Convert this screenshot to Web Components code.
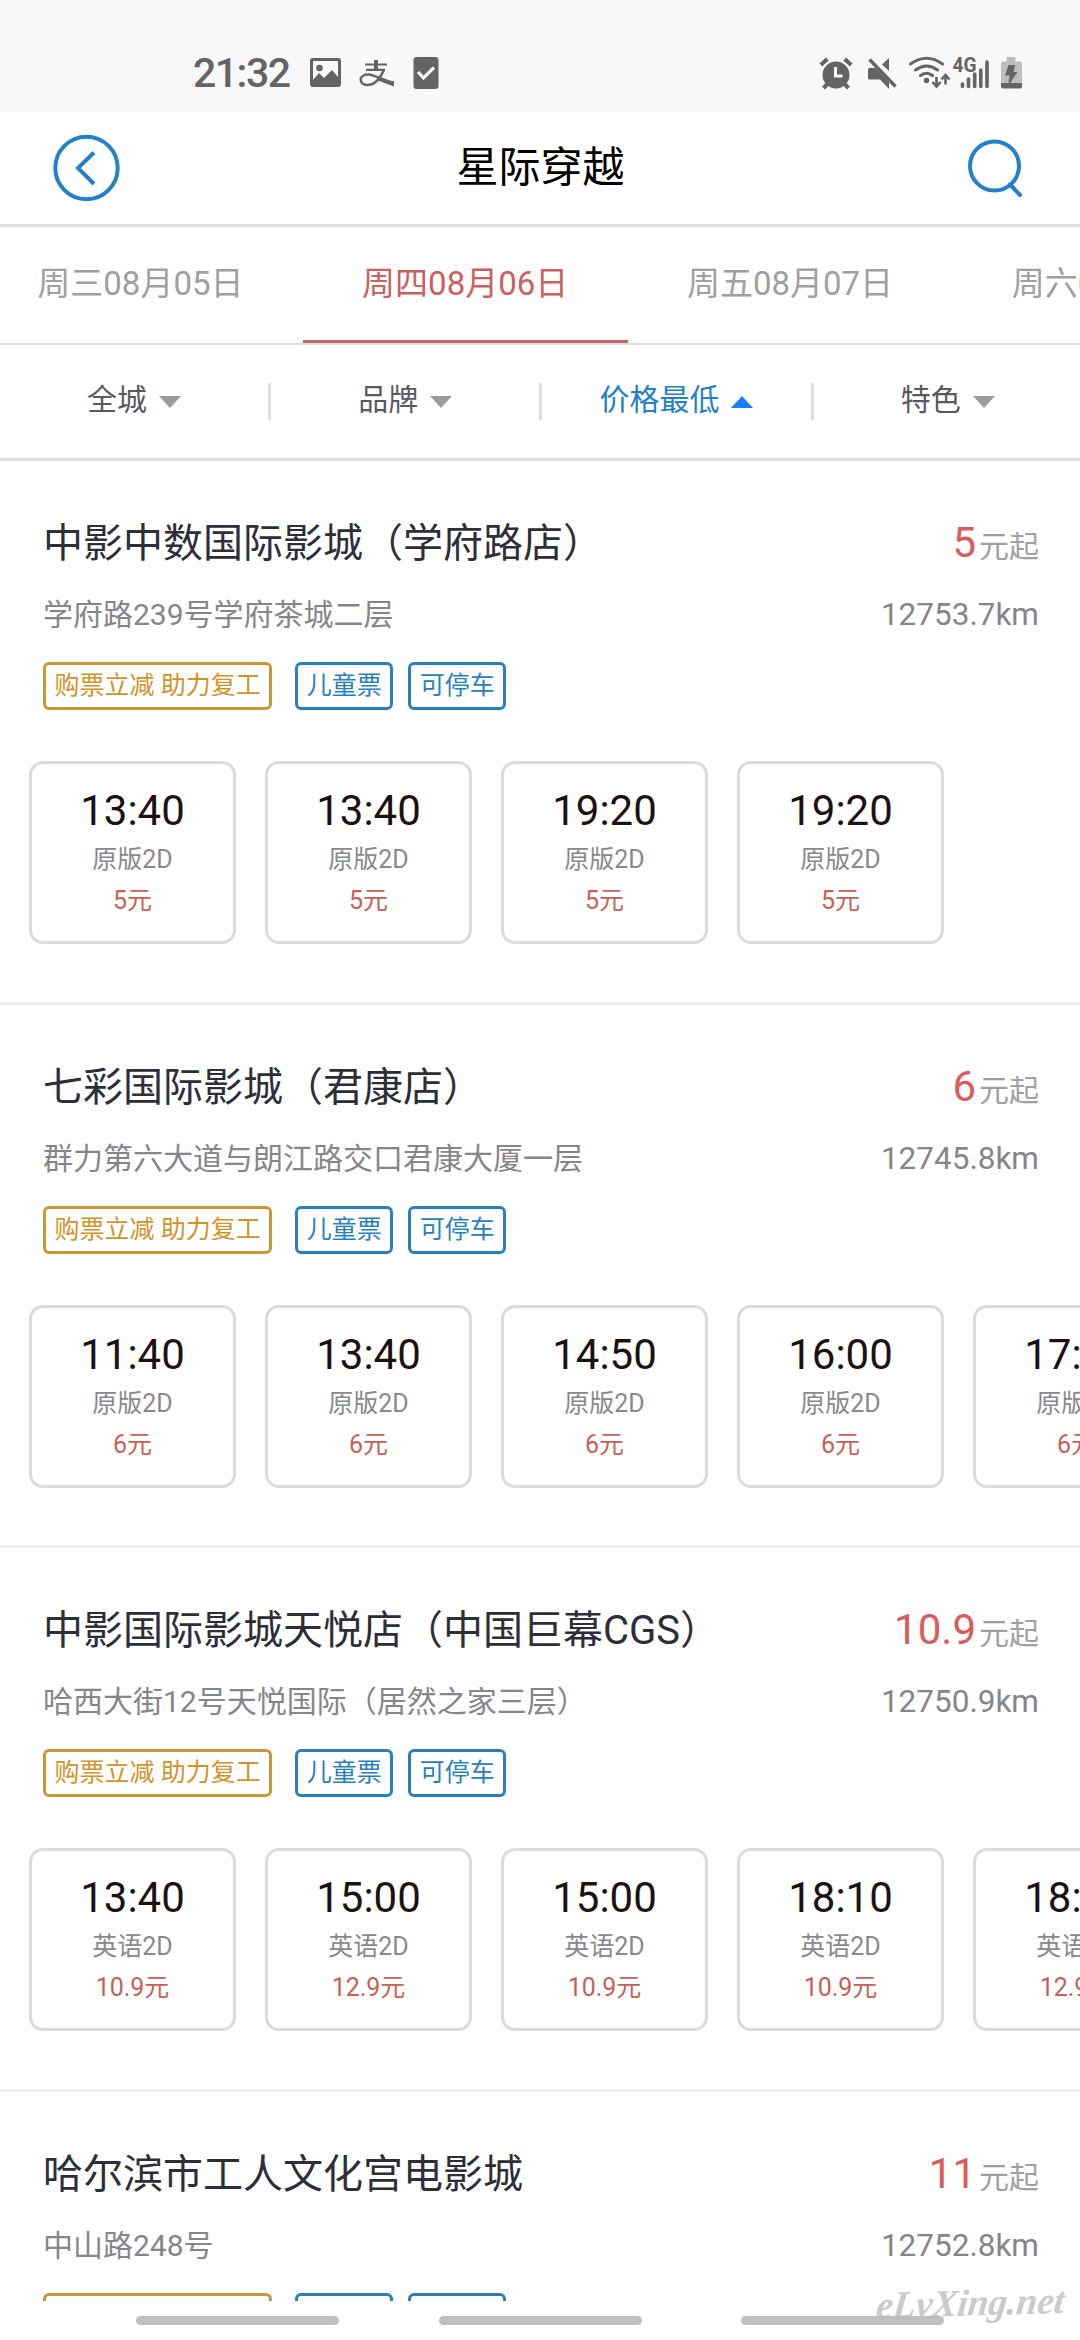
<!DOCTYPE html>
<html lang="zh-CN">
<head>
<meta charset="utf-8">
<title>星际穿越</title>
<style>
  html, body { margin: 0; padding: 0; }
  body {
    width: 1080px;
    height: 2340px;
    overflow: hidden;
    background: #fff;
    font-family: Roboto, "Noto Sans CJK SC", sans-serif;
  }
</style>
</head>
<body>
<cinema-app></cinema-app>

<script>
(function() {

  // Small base class: every component just supplies its template
  class BaseElement extends HTMLElement {
    constructor() {
      super();
      this.attachShadow({ mode: 'open' });
    }

    connectedCallback() {
      this.shadowRoot.innerHTML = this.template();
    }

    attr(name) {
      return this.getAttribute(name) || '';
    }
  }

  class StatusBar extends BaseElement {
    template() {
      return `
        <style>
          :host {
            display: flex;
            flex: none;
            box-sizing: border-box;
            height: 112px;
            padding: 52px 58px 18px 193px;
            align-items: center;
            justify-content: space-between;
            background: #f8f8f8;
            color: #646464;
          }
          .group { display: flex; align-items: center; }
          .time { width: 100px; font-size: 41px; font-weight: 500; line-height: 42px; letter-spacing: -1.5px; }
          svg { display: block; flex: none; }
          .left svg:nth-of-type(1) { margin-left: 16px; }
          .left svg:nth-of-type(2) { margin-left: 16px; }
          .left svg:nth-of-type(3) { margin-left: 17px; }
        </style>
        <div class="group left">
          <span class="time">21:32</span>
          <!-- gallery -->
          <svg width="34" height="34" viewBox="0 0 34 34">
            <path fill="currentColor" fill-rule="evenodd" d="M4 2h25q3 0 3 3v23q0 3-3 3H4q-3 0-3-3V5q0-3 3-3zM4 5v19l6-7 5 5 8-8 6 7V5z"/>
            <circle cx="10.5" cy="12" r="3.3" fill="currentColor"/>
          </svg>
          <!-- alipay -->
          <svg width="36" height="34" viewBox="0 0 36 34" fill="none" stroke="currentColor" stroke-width="2.2">
            <path d="M6 8.500H28M7 13.800H26"/>
            <path d="M17 4V14" stroke-width="4"/>
            <path d="M25 13.500C21 23 15 29 8.500 29C4 29 1.500 26.500 1.700 23.500C2 20 6 18 10 18.500C17 19.500 24 24 35 27.500" stroke-width="2.500"/>
            <path d="M19 21.500L35 25.500V30.500L17.500 24z" fill="currentColor" stroke="none"/>
          </svg>
          <!-- clipboard check -->
          <svg width="28" height="34" viewBox="0 0 28 34">
            <rect x="1.500" y="1" width="25" height="32" rx="3" fill="currentColor"/>
            <path d="M6 16l5.500 6L22 11.500" fill="none" stroke="#f8f8f8" stroke-width="3.200"/>
          </svg>
        </div>
        <div class="group">
          <!-- alarm, mute, wifi, signal and battery share one strip -->
          <svg width="204" height="36" viewBox="818 55 204 36" fill="none" stroke="currentColor">
            <circle cx="836" cy="75" r="13.500" fill="currentColor" stroke="none"/>
            <path d="M820.800 65l6.500-6M851.200 65l-6.500-6M823.500 88l4-4M848.500 88l-4-4" stroke-width="4"/>
            <path d="M835.500 67v9h7" stroke="#f8f8f8" stroke-width="3"/>
            <path d="M868 69.500q0-1.500 1.500-1.500h6L889 82v7l-9-9.500h-10.500q-1.500 0-1.500-1.500zM889 58v13l-7-6.500z" fill="currentColor" stroke="none"/>
            <path d="M869.500 59.500L895.500 86.500" stroke-width="3.400"/>
            <path d="M910.500 64q16-11.500 32 0M915.500 70q11-8 22 0M920.500 75.500q6-4.500 12 0" stroke-width="3" stroke-linecap="round"/>
            <circle cx="926.500" cy="80.500" r="2.700" fill="currentColor" stroke="none"/>
            <path d="M936.500 77v10M945.500 84.500v-9" stroke-width="2.600"/>
            <path d="M932.500 82l4 4.500 4-4.500M941.500 79.500l4-4.500 4 4.500" stroke-width="2.600"/>
            <text x="952.500" y="72" font-size="20" font-weight="700" textLength="24" lengthAdjust="spacingAndGlyphs" fill="currentColor" stroke="none">4G</text>
            <path d="M962.500 84v2.500M968.500 79v7.500M974.700 74v12.500M980.800 70v16.500M987 62v24.500" stroke-width="3.600" stroke-linecap="round"/>
            <path d="M1006.500 57h9v4.500h4.500q2 0 2 2V83h-21V63.500q0-2 2-2h3.500z" fill="#bdbdbd" stroke="none"/>
            <path d="M1001 83h21v3.500q0 2-2 2h-17q-2 0-2-2z" fill="currentColor" stroke="none"/>
            <path d="M1008.500 65h6.500l-1.500 7h4l-8 12h-1l1-8.500h-4.500z" fill="currentColor" stroke="none"/>
          </svg>
        </div>
      `;
    }
  }

  class NavHeader extends BaseElement {
    template() {
      return `
        <style>
          :host {
            display: flex;
            flex: none;
            box-sizing: border-box;
            height: 115px;
            padding: 0 51px 0 52px;
            align-items: center;
            justify-content: space-between;
            border-bottom: 3px solid #dedede;
          }
          h1 { margin: 0; font-size: 42px; line-height: 60px; font-weight: 400; color: #000; }
          svg { display: block; fill: none; stroke: #2580ca; stroke-width: 4; }
        </style>
        <svg width="70" height="70" viewBox="0 0 70 70">
          <circle cx="34.500" cy="35" r="31.200"/>
          <path d="M42 19.500L26 35l16 16"/>
        </svg>
        <h1><slot></slot></h1>
        <svg width="70" height="70" viewBox="0 0 70 70">
          <circle cx="35.500" cy="33" r="24.500"/>
          <path d="M51 51.500l10 10.500" stroke-linecap="round"/>
        </svg>
      `;
    }
  }

  class DateTabs extends BaseElement {
    template() {
      return `
        <style>
          :host {
            display: flex;
            flex: none;
            box-sizing: border-box;
            height: 118px;
            overflow: hidden;
            border-bottom: 2px solid #dedede;
          }
          ::slotted(*) { flex: 0 0 324.8px; }
          ::slotted(:first-child) { margin-left: -22px; }
        </style>
        <slot></slot>
      `;
    }
  }

  class DateTab extends BaseElement {
    template() {
      return `
        <style>
          :host {
            display: flex;
            box-sizing: border-box;
            height: 116px;
            padding-bottom: 5px;
            align-items: center;
            justify-content: center;
            border-bottom: 3px solid transparent;
            font-size: 33px;
            color: #a0a0a0;
            white-space: nowrap;
          }
          :host([active]) { color: #cb6060; border-bottom-color: #c96565; }
        </style>
        <span><slot></slot></span>
      `;
    }
  }

  class FilterBar extends BaseElement {
    template() {
      return `
        <style>
          :host {
            display: grid;
            flex: none;
            grid-template-columns: repeat(4, 271.2px);
            align-items: center;
            box-sizing: border-box;
            height: 116px;
            overflow: hidden;
            border-bottom: 3px solid #dedede;
          }
        </style>
        <slot></slot>
      `;
    }
  }

  class FilterItem extends BaseElement {
    template() {
      return `
        <style>
          :host {
            display: flex;
            align-items: center;
            justify-content: center;
            gap: 12px;
            height: 37px;
            font-size: 30px;
            line-height: 31px;
            color: #5a5a5e;
            border-right: 3px solid #dedede;
          }
          :host(:last-child) { border-right-color: transparent; }
          :host([active]) { color: #2580ca; }
          .label { padding-bottom: 5px; }
          svg { display: block; fill: #9c9c9c; }
          :host([active]) svg { fill: #1381f0; transform: rotate(180deg); }
        </style>
        <span class="label"><slot></slot></span>
        <svg width="22" height="12" viewBox="0 0 22 12"><path d="M0 0h22L11 12z"/></svg>
      `;
    }
  }

  class CinemaCard extends BaseElement {
    template() {
      return `
        <style>
          :host {
            display: flex;
            flex: none;
            flex-direction: column;
            box-sizing: border-box;
            height: 543.7px;
            padding-top: 52px;
            border-bottom: 3px solid #eee;
          }
          .row {
            display: flex;
            align-items: baseline;
            justify-content: space-between;
            padding: 0 41px 0 43px;
            white-space: nowrap;
          }
          .title { height: 60px; line-height: 60px; }
          .name { font-size: 40px; color: #2e2e38; }
          .price { font-size: 42px; color: #d85c5e; }
          .unit { margin-left: 3px; font-size: 30px; color: #a0a0a0; }
          .info { height: 40px; margin-top: 21px; line-height: 41px; color: #85868a; }
          .address { font-size: 30px; }
          .distance { font-size: 31.5px; }
          .tags { display: flex; gap: 15px; margin: 28px 43px 51px; }
          .shows { display: flex; gap: 29px; padding-left: 29px; overflow: hidden; }
        </style>
        <div class="row title">
          <span class="name">${this.attr('name')}</span>
          <span><span class="price">${this.attr('price')}</span><span class="unit">元起</span></span>
        </div>
        <div class="row info">
          <span class="address">${this.attr('address')}</span>
          <span class="distance">${this.attr('distance')}</span>
        </div>
        <div class="tags">
          <cinema-tag promo>购票立减 助力复工</cinema-tag>
          <cinema-tag>儿童票</cinema-tag>
          <cinema-tag>可停车</cinema-tag>
        </div>
        <div class="shows"><slot></slot></div>
      `;
    }
  }

  class CinemaTag extends BaseElement {
    template() {
      return `
        <style>
          :host {
            display: block;
            box-sizing: border-box;
            height: 48px;
            padding: 0 8.5px;
            border: 3px solid #2a80bf;
            border-radius: 6px;
            font-size: 25px;
            line-height: 41px;
            color: #2a80bf;
            white-space: nowrap;
          }
          :host([promo]) { margin-right: 8px; border-color: #cb9638; color: #d3922a; }
        </style>
        <slot></slot>
      `;
    }
  }

  class ShowTime extends BaseElement {
    template() {
      return `
        <style>
          :host {
            display: flex;
            flex: 0 0 207px;
            flex-direction: column;
            align-items: center;
            box-sizing: border-box;
            height: 183px;
            padding-top: 22px;
            border: 3px solid #dcdcdc;
            border-radius: 14px;
            font-size: 25px;
            line-height: 34px;
            white-space: nowrap;
          }
          .time { font-size: 42px; line-height: 50px; color: #1c1213; }
          .format { margin-top: 7px; color: #88898c; }
          .price { margin-top: 7px; color: #c85f59; }
        </style>
        <span class="time">${this.attr('time')}</span>
        <span class="format">${this.attr('format')}</span>
        <span class="price"><slot></slot></span>
      `;
    }
  }

  class GestureBar extends BaseElement {
    template() {
      return `
        <style>
          :host {
            display: flex;
            flex: none;
            position: relative;
            box-sizing: border-box;
            height: 39px;
            padding: 15px 136px 0;
            justify-content: space-between;
            background: #fff;
          }
          i { width: 203px; height: 9px; border-radius: 5px; background: #bfbfbf; z-index: 1; }
          /* signature laid over the list and the bars */
          svg { position: absolute; right: 6px; bottom: 0; }
          text {
            font-family: "Liberation Serif", serif;
            font-style: italic;
            font-weight: 700;
            font-size: 38px;
            fill: #cbcbcb;
          }
        </style>
        <i></i><i></i><i></i>
        <svg width="200" height="56" viewBox="0 0 200 56">
          <text x="2" y="34" transform="rotate(-1.5 2 34) skewX(-8)" dx="4" textLength="188" lengthAdjust="spacingAndGlyphs">eLvXing.net</text>
        </svg>
      `;
    }
  }

  const cinemas = [
    {
      name: '中影中数国际影城（学府路店）', price: '5', address: '学府路239号学府茶城二层', distance: '12753.7km', format: '原版2D',
      shows: [['13:40', '5元'], ['13:40', '5元'], ['19:20', '5元'], ['19:20', '5元']]
    },
    {
      name: '七彩国际影城（君康店）', price: '6', address: '群力第六大道与朗江路交口君康大厦一层', distance: '12745.8km', format: '原版2D',
      shows: [['11:40', '6元'], ['13:40', '6元'], ['14:50', '6元'], ['16:00', '6元'], ['17:10', '6元']]
    },
    {
      name: '中影国际影城天悦店（中国巨幕CGS）', price: '10.9', address: '哈西大街12号天悦国际（居然之家三层）', distance: '12750.9km', format: '英语2D',
      shows: [['13:40', '10.9元'], ['15:00', '12.9元'], ['15:00', '10.9元'], ['18:10', '10.9元'], ['18:10', '12.9元']]
    },
    {
      name: '哈尔滨市工人文化宫电影城', price: '11', address: '中山路248号', distance: '12752.8km', format: '',
      shows: []
    }
  ];

  class CinemaApp extends BaseElement {
    template() {
      const cards = cinemas.map(c => `
        <cinema-card name="${c.name}" price="${c.price}" address="${c.address}" distance="${c.distance}">
          ${c.shows.map(([time, price]) => `<show-time time="${time}" format="${c.format}">${price}</show-time>`).join('')}
        </cinema-card>`).join('');

      return `
        <style>
          :host { display: flex; flex-direction: column; width: 1080px; height: 2340px; }
          main { display: flex; flex: 1; flex-direction: column; min-height: 0; overflow: hidden; }
        </style>
        <status-bar></status-bar>
        <nav-header>星际穿越</nav-header>
        <date-tabs>
          <date-tab>周三08月05日</date-tab>
          <date-tab active>周四08月06日</date-tab>
          <date-tab>周五08月07日</date-tab>
          <date-tab>周六08月08日</date-tab>
        </date-tabs>
        <filter-bar>
          <filter-item>全城</filter-item>
          <filter-item>品牌</filter-item>
          <filter-item active>价格最低</filter-item>
          <filter-item>特色</filter-item>
        </filter-bar>
        <main>${cards}</main>
        <gesture-bar></gesture-bar>
      `;
    }
  }

  customElements.define('status-bar', StatusBar);
  customElements.define('nav-header', NavHeader);
  customElements.define('date-tabs', DateTabs);
  customElements.define('date-tab', DateTab);
  customElements.define('filter-bar', FilterBar);
  customElements.define('filter-item', FilterItem);
  customElements.define('cinema-tag', CinemaTag);
  customElements.define('show-time', ShowTime);
  customElements.define('cinema-card', CinemaCard);
  customElements.define('gesture-bar', GestureBar);
  customElements.define('cinema-app', CinemaApp);

})();
</script>
</body>
</html>
